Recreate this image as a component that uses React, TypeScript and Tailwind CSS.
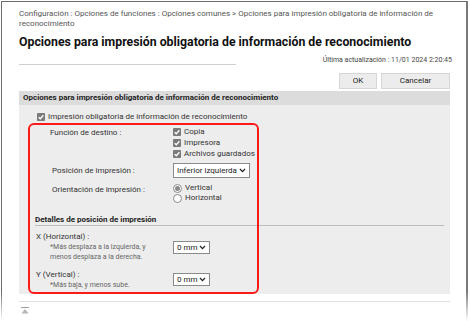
import React from "react";

const font = { fontFamily: 'Roboto, "Noto Sans", sans-serif' };

function Check() {
  return (
    <span className="inline-flex h-[8px] w-[8px] shrink-0 items-center justify-center rounded-[1px] bg-[#7a7a7a]">
      <svg viewBox="0 0 8 8" className="h-[8px] w-[8px]">
        <path d="M1.6 4.2 L3.3 5.8 L6.4 2.3" fill="none" stroke="#fff" strokeWidth="1.3" />
      </svg>
    </span>
  );
}

function Radio({ on }: { on?: boolean }) {
  return (
    <span className="inline-flex h-[9px] w-[9px] shrink-0 items-center justify-center rounded-full border border-[#8a8a8a] bg-white">
      {on && <span className="h-[5px] w-[5px] rounded-full bg-[#8a8a8a]" />}
    </span>
  );
}

function Select({ value, cls }: { value: string; cls: string }) {
  return (
    <div className={`flex ${cls} items-center justify-between whitespace-nowrap border border-[#8a8a8a] bg-white pl-[3px] pr-[3px] text-[8px] leading-none text-[#222]`}>
      <span>{value}</span>
      <svg viewBox="0 0 8 6" className="h-[5px] w-[7px]">
        <path d="M1 1.2 L4 4.3 L7 1.2" fill="none" stroke="#222" strokeWidth="1.5" />
      </svg>
    </div>
  );
}

export default function App() {
  return (
    <div className="relative h-[321px] w-[470px] overflow-hidden bg-white text-[#333]" style={font}>
      {/* window frame */}
      <div className="ml-[1px] mt-[1px] h-[330px] w-[467px] border-l border-r-2 border-t border-l-[#6b6b6b] border-r-[#7a7a7a] border-t-[#6b6b6b] bg-white pl-[17px] pr-[14px]">
        {/* breadcrumb */}
        <div className="pt-[7px] text-[8px] leading-[10px] text-[#555]">
          Configuración : Opciones de funciones : Opciones comunes &gt; Opciones para impresión obligatoria de información de
          reconocimiento
        </div>
        <h1 className="mt-[6px] text-[12.3px] font-bold leading-[15px] text-[#111]">
          Opciones para impresión obligatoria de información de reconocimiento
        </h1>
        <div className="mt-[5px] flex">
          <div className="w-1/2 border-b border-[#d0d0d0]" />
          <div className="w-1/2 text-right text-[7px] leading-[10px] text-[#444]">Última actualización : 11/01 2024 2:20:45</div>
        </div>
        <div className="mt-[8px] flex justify-end gap-[4px] pr-[2px]">
          <button className="h-[16px] w-[38px] border border-[#d6d6d6] bg-[#ececec] text-[8px] text-[#222]">OK</button>
          <button className="h-[16px] w-[69px] border border-[#d6d6d6] bg-[#ececec] text-[8px] text-[#222]">Cancelar</button>
        </div>

        {/* section */}
        <div className="mt-[2px] mr-[2px] bg-[#ededed]">
          <div className="bg-[#dcdcdc] px-[4px] py-[1px] text-[8px] font-bold leading-[12px] text-[#222]">
            Opciones para impresión obligatoria de información de reconocimiento
          </div>
          <div className="relative pb-[4px] pl-[16px] pr-[6px] pt-[6px] text-[8px] leading-[11px] text-[#333]">
            <div className="flex items-center gap-[3px] pl-[2px]">
              <Check />
              <span>Impresión obligatoria de información de reconocimiento</span>
            </div>

            <div className="mt-[4px] grid grid-cols-[123px_1fr] gap-y-[4px] pl-[15px]">
              <div className="pt-[1px]">Función de destino :</div>
              <div className="flex flex-col">
                <div className="flex items-center gap-[3px]"><Check />Copia</div>
                <div className="flex items-center gap-[3px]"><Check />Impresora</div>
                <div className="flex items-center gap-[3px]"><Check />Archivos guardados</div>
              </div>
              <div className="flex items-center pl-[2px]">Posición de impresión :</div>
              <Select value="Inferior izquierda" cls="h-[15px] w-[77px]" />
              <div className="mt-[1px] pl-[2px] pt-[1px]">Orientación de impresión :</div>
              <div className="mt-[1px] flex flex-col leading-[10px]">
                <div className="flex items-center gap-[3px]"><Radio on />Vertical</div>
                <div className="flex items-center gap-[3px]"><Radio />Horizontal</div>
              </div>
            </div>

            <div className="mt-[11px] border-b border-[#bdbdbd] text-[8px] font-bold text-[#222]">
              Detalles de posición de impresión
            </div>

            <div className="mt-[5px] grid grid-cols-[137px_1fr] gap-y-[7px] pl-[1px]">
              <div>
                <div>X (Horizontal) :</div>
                <div className="pl-[14px] text-[7px] leading-[10px] text-[#666]">
                  *Más desplaza a la izquierda, y
                  <br />
                  menos desplaza a la derecha.
                </div>
              </div>
              <div className="pt-[10px]"><Select value="0 mm" cls="h-[13px] w-[37px]" /></div>
              <div>
                <div>Y (Vertical) :</div>
                <div className="pl-[14px] text-[7px] leading-[10px] text-[#666]">*Más baja, y menos sube.</div>
              </div>
              <div className="pt-[4px]"><Select value="0 mm" cls="h-[13px] w-[37px]" /></div>
            </div>

            {/* annotation */}
            <div className="absolute bottom-0 left-[9px] top-[18px] w-[231px] rounded-[6px] border-2 border-[#ff1a1a]" />
          </div>
        </div>
        <div className="mr-[2px] mt-[7px] border-t border-[#e0e0e0]" />
        <div className="mt-[5px] pl-[2px]">
          <svg viewBox="0 0 8 7" className="h-[7px] w-[8px]">
            <rect x="0" y="0" width="8" height="1" fill="#9a9a9a" />
            <path d="M4 2 L7.5 6.5 L0.5 6.5 Z" fill="#b5b5b5" />
          </svg>
        </div>
      </div>
      {/* fade at bottom of frame */}
      <div className="absolute bottom-0 left-0 h-[30px] w-[4px] bg-gradient-to-b from-transparent to-white" />
      <div className="absolute bottom-0 right-0 h-[30px] w-[6px] bg-gradient-to-b from-transparent to-white" />
    </div>
  );
}
